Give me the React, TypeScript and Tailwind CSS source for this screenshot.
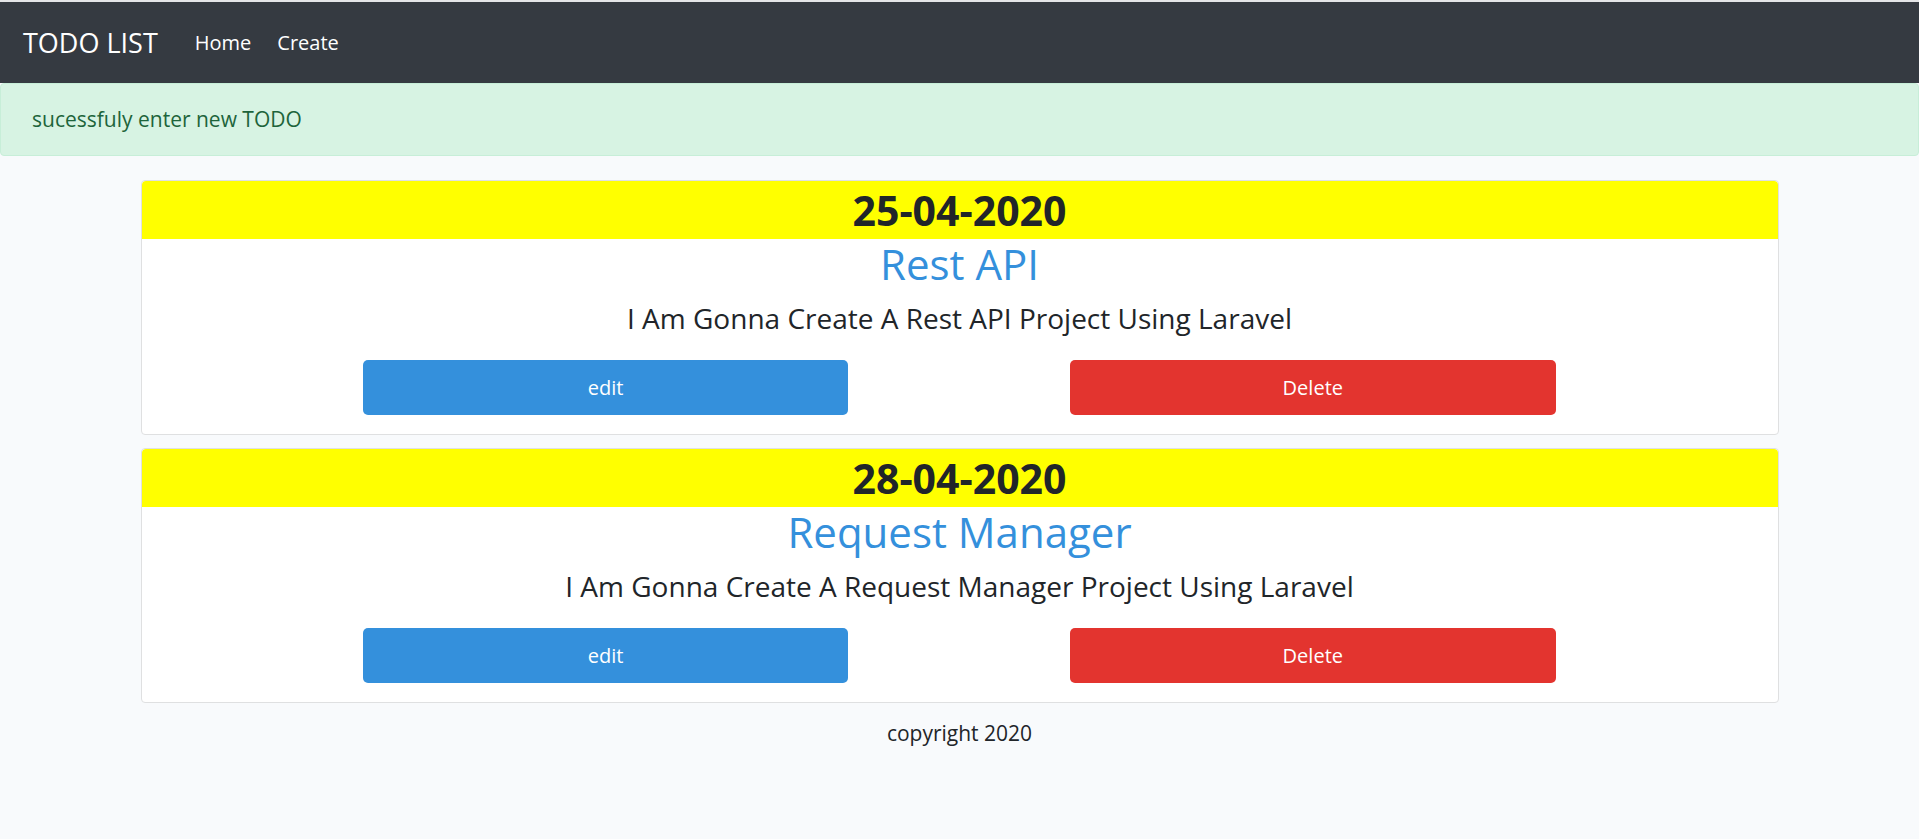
const todos = [
  {
    date: "25-04-2020",
    title: "Rest API",
    body: "I Am Gonna Create A Rest API Project Using Laravel",
  },
  {
    date: "28-04-2020",
    title: "Request Manager",
    body: "I Am Gonna Create A Request Manager Project Using Laravel",
  },
];

function TodoCard({ date, title, body }: { date: string; title: string; body: string }) {
  return (
    <div className="bg-white border border-[#dfe0e1] rounded-[4px] overflow-hidden">
      <div className="h-[58px] bg-[#ffff00] rounded-t-[4px] flex items-center justify-center">
        <h1 className="text-[41px] font-bold text-[#212529] leading-none">{date}</h1>
      </div>
      <div className="text-center pb-[19px]">
        <h2 className="h-[50px] flex items-center justify-center text-[42px] text-[#3490dc] leading-none">
          {title}
        </h2>
        <p className="mt-[8px] h-[42px] flex items-center justify-center text-[28px] text-[#212529] leading-none">
          {body}
        </p>
        <div className="mt-[21px] flex justify-evenly">
          <button className="w-[485px] h-[55px] rounded-[5px] bg-[#3490dc] text-white text-[20px]">
            edit
          </button>
          <button className="w-[486px] h-[55px] rounded-[5px] bg-[#e3342f] text-white text-[20px]">
            Delete
          </button>
        </div>
      </div>
    </div>
  );
}

export default function App() {
  return (
    <div
      className="min-h-[839px] bg-[#f8fafc] text-[#212529]"
      style={{ fontFamily: '"Open Sans", "Noto Sans", sans-serif' }}
    >
      <nav className="h-[83px] bg-[#353a41] border-t-2 border-[#e4e5e7] flex items-center px-[23px]">
        <span className="text-white text-[27px] leading-none">TODO LIST</span>
        <div className="ml-[37px] flex gap-[26px] text-white text-[20px]">
          <a>Home</a>
          <a>Create</a>
        </div>
      </nav>
      <div className="h-[73px] flex items-center px-[31px] bg-[#d7f3e3] border border-[#c7eed8] rounded-[4px] text-[#1d643b] text-[21px]">
        sucessfuly enter new TODO
      </div>
      <div className="w-[1638px] mx-auto mt-[24px] flex flex-col gap-[13px]">
        {todos.map((t) => (
          <TodoCard key={t.date} {...t} />
        ))}
      </div>
      <p className="mt-[15px] text-center text-[21px]">copyright 2020</p>
    </div>
  );
}
